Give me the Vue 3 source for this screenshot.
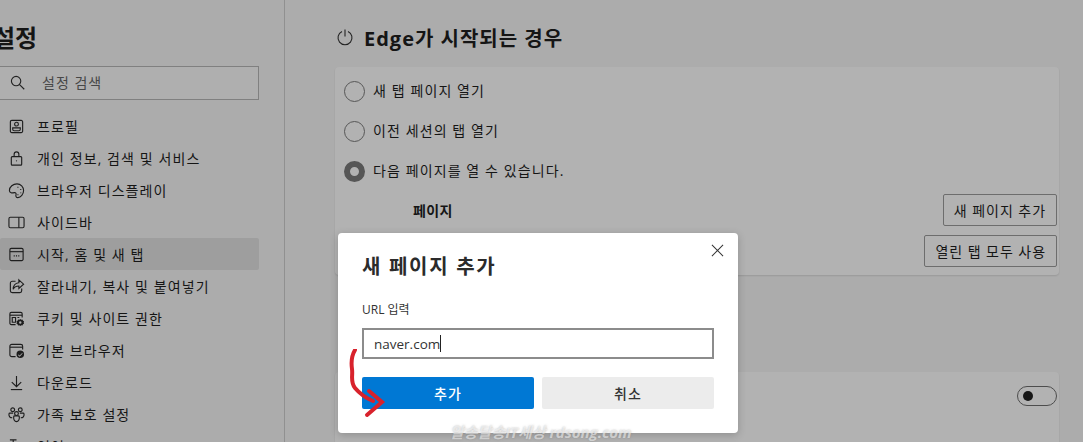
<template>
  <div class="page">
    <aside class="sidebar">
      <h1 class="side-title">설정</h1>

      <div class="search">
        <svg class="search-icon" viewBox="0 0 16 16">
          <path d="M6.5 1.5a5 5 0 1 1 0 10a5 5 0 0 1 0-10zM10.2 10.2l5 5" />
        </svg>
        <span>설정 검색</span>
      </div>

      <nav class="nav">
        <div
          v-for="item in navItems"
          :key="item.label"
          class="nav-item"
          :class="{ active: item.active }"
        >
          <svg class="nav-icon" viewBox="0 0 18 18">
            <path v-for="d in item.paths" :key="d" :d="d" />
            <path v-if="item.solid" class="solid" :d="item.solid" />
          </svg>
          <span>{{ item.label }}</span>
        </div>
      </nav>
    </aside>

    <main class="content">
      <div class="section-head">
        <svg class="power" viewBox="0 0 18 18">
          <path d="M6 3.4a7 7 0 1 0 6 0M9 1.5v7" />
        </svg>
        <h2>Edge가 시작되는 경우</h2>
      </div>

      <section class="card">
        <div
          v-for="opt in startOptions"
          :key="opt.label"
          class="radio-row"
        >
          <span class="radio" :class="{ checked: opt.checked }"></span>
          <span class="radio-label">{{ opt.label }}</span>
        </div>

        <div class="pages">
          <strong>페이지</strong>
          <div class="page-actions">
            <button class="outline-btn">새 페이지 추가</button>
            <button class="outline-btn">열린 탭 모두 사용</button>
          </div>
        </div>
      </section>

      <section class="card second">
        <span class="toggle"><i></i></span>
      </section>
    </main>

    <div class="overlay"></div>

    <div class="dialog">
      <button class="close-btn" aria-label="닫기">
        <svg viewBox="0 0 14 14"><path d="M1 1l12 12M13 1L1 13" /></svg>
      </button>
      <h3>새 페이지 추가</h3>
      <label>URL 입력</label>
      <div class="url-input">naver.com<span class="caret"></span></div>
      <div class="dialog-actions">
        <button class="primary">추가</button>
        <button class="secondary">취소</button>
      </div>
    </div>

    <svg class="scribble" viewBox="0 0 50 70">
      <path d="M11 1C8 6 7 13 8 20C9 27 6 33 11 39C16 45 22 49 29 52" />
      <path d="M25 42L38 53L23 66" />
    </svg>

    <div class="watermark">알송달송IT세상 rdsong.com</div>
  </div>
</template>

<script setup>
const navItems = [
  {
    label: "프로필",
    paths: [
      "M4 2.5h10a1.5 1.5 0 0 1 1.5 1.5v10a1.5 1.5 0 0 1-1.5 1.5H4A1.5 1.5 0 0 1 2.5 14V4A1.5 1.5 0 0 1 4 2.5z",
      "M9 4.5a2 2 0 1 1 0 4a2 2 0 0 1 0-4z",
      "M5 10.5h8v1.5a1.5 1.5 0 0 1-1.5 1.5h-5A1.5 1.5 0 0 1 5 12z",
    ],
  },
  {
    label: "개인 정보, 검색 및 서비스",
    paths: [
      "M4.5 7h9a1 1 0 0 1 1 1v7a1 1 0 0 1-1 1h-9a1 1 0 0 1-1-1V8a1 1 0 0 1 1-1z",
      "M6.5 7V4.500a2.500 2.500 0 0 1 5 0V7",
      "M9 11v1",
    ],
  },
  {
    label: "브라우저 디스플레이",
    paths: [
      "M9.500 2c4 0 7 3 7 7s-3 7.500-6 7.500c-2 0-2.500-1.500-2-3c.5-1.500-.5-2.500-2-2.200c-2 .5-5 .5-5-2.300C1.500 5 5.500 2 9.500 2z",
      "M10.500 5v1M13.500 7.500v1M13.500 11v1M10.500 13v1",
    ],
  },
  {
    label: "사이드바",
    paths: [
      "M2.500 3.500h13a1.500 1.500 0 0 1 1.500 1.500v8a1.500 1.500 0 0 1-1.500 1.500h-13A1.500 1.500 0 0 1 1 13V5a1.500 1.500 0 0 1 1.500-1.500z",
      "M11.500 3.500v11",
    ],
  },
  {
    label: "시작, 홈 및 새 탭",
    active: true,
    paths: [
      "M3.500 2.500h11a1.500 1.500 0 0 1 1.500 1.500v10a1.500 1.500 0 0 1-1.500 1.500h-11A1.500 1.500 0 0 1 2 14V4a1.500 1.500 0 0 1 1.500-1.500z",
      "M2 6h14",
      "M6 10.500h1.200M8.400 10.500h1.200M10.800 10.500h1.200",
    ],
  },
  {
    label: "잘라내기, 복사 및 붙여넣기",
    paths: [
      "M8 3.500H4.500A2 2 0 0 0 2.500 5.500v8a2 2 0 0 0 2 2h8a2 2 0 0 0 2-2V11",
      "M11.500 2l5 4.500l-5 4.500V8.500c-3 0-5 1-6 3.500c0-4 2-6.500 6-7z",
    ],
  },
  {
    label: "쿠키 및 사이트 권한",
    paths: [
      "M8 15.500H3.500a1.500 1.500 0 0 1-1.500-1.500V4a1.500 1.500 0 0 1 1.500-1.500h10A1.500 1.500 0 0 1 15 4v4",
      "M2 5.500h13",
      "M4.500 8h3.500v5H4.500zM10 8h2",
    ],
    solid:
      "M13 9.500l1 .8l1.300-.2l.6 1.200l1.100.7l-.4 1.200l.4 1.300l-1.100.7l-.6 1.200l-1.300-.2l-1 .8l-1-.8l-1.300.2l-.6-1.200l-1.100-.7l.4-1.300l-.4-1.200l1.100-.7l.6-1.200l1.300.2zM13 12a1.300 1.300 0 1 0 0 2.600a1.300 1.300 0 0 0 0-2.600z",
  },
  {
    label: "기본 브라우저",
    paths: [
      "M8 15.500H4a2 2 0 0 1-2-2V4.500a2 2 0 0 1 2-2h9.500a2 2 0 0 1 2 2V8",
      "M2 5.500h13.500",
    ],
    solid:
      "M13 9a4 4 0 1 1 0 8a4 4 0 0 1 0-8zM15 11.700l-2.700 2.700l-1.300-1.200l-.5.500l1.800 1.800l3.200-3.300z",
  },
  {
    label: "다운로드",
    paths: ["M9 2v11M4 8.500L9 13.500L14 8.500", "M3 16.500h12"],
  },
  {
    label: "가족 보호 설정",
    paths: [
      "M5 2a2 2 0 1 1 0 4a2 2 0 0 1 0-4zM13 2a2 2 0 1 1 0 4a2 2 0 0 1 0-4zM9 6a2 2 0 1 1 0 4a2 2 0 0 1 0-4z",
      "M6 11.500c-.2 3 1 5 3 5s3.200-2 3-5c-.1-.7-.5-1-1-1H7c-.5 0-.9.3-1 1z",
      "M4.500 12.500C2 12.500.800 11 1 8.500c.1-.7.5-1 1-1h3.500M13.500 12.500c2.500 0 3.700-1.500 3.500-4c-.1-.7-.5-1-1-1h-3.500",
    ],
  },
  {
    label: "언어",
    paths: ["M2 2h7M5.500 2v3M3 5h5c0 2-2 4-5 5"],
  },
];

const startOptions = [
  { label: "새 탭 페이지 열기" },
  { label: "이전 세션의 탭 열기" },
  { label: "다음 페이지를 열 수 있습니다.", checked: true },
];
</script>

<style>
html,
body {
  margin: 0;
  overflow: hidden;
}
</style>

<style scoped>
.page {
  position: relative;
  display: flex;
  width: 1083px;
  height: 442px;
  overflow: hidden;
  background: #f7f7f7;
  color: #1f1f1f;
  font-family: "Open Sans", "Noto Sans CJK KR", sans-serif;
  font-size: 14px;
}

.sidebar {
  flex: none;
  box-sizing: border-box;
  width: 285px;
  border-right: 1px solid #cfcfcf;
  padding-right: 25px;
}

.side-title {
  margin: 19px 0 0 -7px;
  font-size: 24px;
  line-height: 36px;
  font-weight: 700;
  font-family: "Noto Sans CJK KR", sans-serif;
}

.search {
  display: flex;
  align-items: center;
  box-sizing: border-box;
  height: 34px;
  margin-top: 11px;
  padding-left: 10px;
  padding-bottom: 2px;
  background: #fbfbfb;
  border: 1px solid #b8b8b8;
  border-left: none;
  color: #666;
  letter-spacing: 1px;
}

.search-icon {
  width: 15px;
  height: 15px;
  margin-right: 17px;
  fill: none;
  stroke: #333;
  stroke-width: 1.2;
}

.nav {
  margin-top: 10px;
}

.nav-item {
  display: flex;
  align-items: center;
  height: 32px;
  padding-left: 8px;
  letter-spacing: 1.1px;
  white-space: nowrap;
}

.nav-item.active {
  background: #e3e3e3;
  border-radius: 2px;
}

.nav-icon {
  flex: none;
  width: 17px;
  height: 17px;
  margin-right: 12px;
  fill: none;
  stroke: #2b2b2b;
  stroke-width: 1.2;
}

.nav-icon .solid {
  fill: #2b2b2b;
  stroke: none;
  fill-rule: evenodd;
}

.content {
  flex: 1;
  min-width: 0;
  padding: 0 24px 0 50px;
}

.section-head {
  display: flex;
  align-items: center;
  gap: 10px;
  height: 30px;
  margin-top: 22px;
  margin-left: 1px;
}

.section-head h2 {
  margin: 0;
  font-size: 20px;
  font-weight: 700;
  letter-spacing: 1px;
}

.power {
  width: 18px;
  height: 18px;
  fill: none;
  stroke: #333;
  stroke-width: 1.1;
}

.card {
  position: relative;
  box-sizing: border-box;
  height: 208px;
  margin-top: 15px;
  padding: 4px 2px 0 9px;
  background: #ffffff;
  border-radius: 4px;
  box-shadow: 0 1px 2px rgba(0, 0, 0, 0.12);
}

.card.second {
  height: 90px;
  margin-top: 97px;
  padding: 14px 2px 0 0;
  display: flex;
  justify-content: flex-end;
  align-items: flex-start;
}

.radio-row {
  display: flex;
  align-items: center;
  gap: 8px;
  height: 40px;
}

.radio-label {
  padding-bottom: 2px;
  letter-spacing: 1.1px;
}

.radio {
  box-sizing: border-box;
  width: 21px;
  height: 21px;
  border: 1px solid #7d7d7d;
  border-radius: 50%;
}

.radio.checked {
  border: 6px solid #7b7b7b;
  background: #fff;
}

.pages {
  display: flex;
  justify-content: space-between;
  align-items: flex-start;
  padding-left: 69px;
  margin-top: 3px;
}

.pages strong {
  font-weight: 700;
  margin-top: 6px;
  letter-spacing: 0.4px;
}

.page-actions {
  display: flex;
  flex-direction: column;
  align-items: flex-end;
  gap: 9px;
}

.outline-btn {
  box-sizing: border-box;
  height: 32px;
  padding: 0 10px;
  background: #fff;
  border: 1px solid #9c9c9c;
  border-radius: 2px;
  color: #1f1f1f;
  font: inherit;
  letter-spacing: 0.95px;
  white-space: nowrap;
}

.toggle {
  display: flex;
  align-items: center;
  box-sizing: border-box;
  width: 40px;
  height: 20px;
  padding-left: 5px;
  border: 1px solid #6f6f6f;
  border-radius: 10px;
}

.toggle i {
  width: 10px;
  height: 10px;
  border-radius: 50%;
  background: #222;
}

.overlay {
  position: absolute;
  inset: 0;
  background: rgba(0, 0, 0, 0.3);
}

.dialog {
  position: absolute;
  left: 338px;
  top: 233px;
  box-sizing: border-box;
  width: 400px;
  height: 200px;
  padding: 19px 24px 0;
  background: #fff;
  border-radius: 4px;
  box-shadow: 0 2px 8px rgba(0, 0, 0, 0.2);
}

.dialog h3 {
  margin: 0;
  font-size: 20px;
  line-height: 30px;
  font-weight: 700;
  letter-spacing: 1.7px;
  color: #2b2b2b;
}

.dialog label {
  display: block;
  margin-top: 19px;
  font-size: 12px;
  line-height: 18px;
  color: #333;
}

.close-btn {
  position: absolute;
  right: 14px;
  top: 11px;
  width: 13px;
  height: 13px;
  padding: 0;
  border: none;
  background: none;
}

.close-btn svg {
  display: block;
  width: 13px;
  height: 13px;
  fill: none;
  stroke: #333;
  stroke-width: 1.1;
}

.url-input {
  display: flex;
  align-items: center;
  box-sizing: border-box;
  width: 352px;
  height: 31px;
  margin-top: 9px;
  padding-left: 10px;
  border: 2px solid #8c8c8c;
  font-size: 13.5px;
  color: #333;
}

.caret {
  width: 1px;
  height: 17px;
  background: #222;
}

.dialog-actions {
  display: flex;
  gap: 8px;
  margin-top: 18px;
}

.dialog-actions button {
  flex: 1;
  height: 32px;
  border: none;
  border-radius: 2px;
  font: inherit;
  font-weight: 500;
  letter-spacing: 1px;
}

.primary {
  background: #0078d4;
  color: #fff;
}

.secondary {
  background: #ececec;
  color: #333;
}

.scribble {
  position: absolute;
  left: 344px;
  top: 349px;
  width: 50px;
  height: 70px;
  fill: none;
  stroke: #d8222c;
  stroke-width: 4;
  stroke-linecap: round;
}

.watermark {
  position: absolute;
  left: 450px;
  top: 421px;
  font-size: 15px;
  font-style: italic;
  font-weight: 700;
  color: rgba(255, 255, 255, 0.55);
  text-shadow: 0 0 2px rgba(120, 120, 120, 0.5);
  white-space: nowrap;
}
</style>
